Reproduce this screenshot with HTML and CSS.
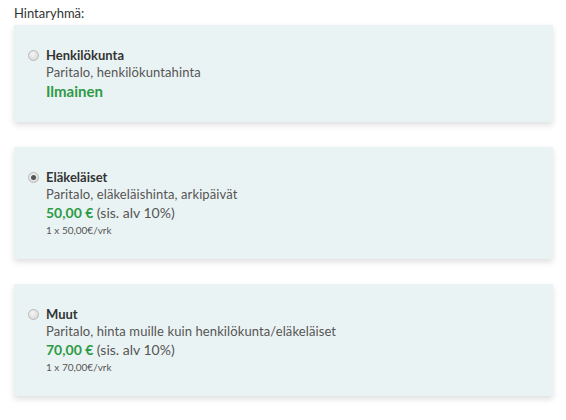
FILE: index.html
```html
<!DOCTYPE html>
<html lang="fi">
<head>
<meta charset="utf-8">
<link rel="stylesheet" href="styles.css">
</head>
<body>
<div class="group">
  <div class="label">Hintaryhmä:</div>
  <label class="card">
    <span class="radio"></span>
    <span class="info">
      <span class="title">Henkilökunta</span>
      <span class="desc">Paritalo, henkilökuntahinta</span>
      <span class="free">Ilmainen</span>
    </span>
  </label>
  <label class="card">
    <span class="radio checked"></span>
    <span class="info">
      <span class="title">Eläkeläiset</span>
      <span class="desc">Paritalo, eläkeläishinta, arkipäivät</span>
      <span class="price"><b>50,00 €</b> (sis. alv 10%)</span>
      <span class="unit">1 x 50,00€/vrk</span>
    </span>
  </label>
  <label class="card">
    <span class="radio"></span>
    <span class="info">
      <span class="title">Muut</span>
      <span class="desc">Paritalo, hinta muille kuin henkilökunta/eläkeläiset</span>
      <span class="price"><b>70,00 €</b> (sis. alv 10%)</span>
      <span class="unit">1 x 70,00€/vrk</span>
    </span>
  </label>
</div>
</body>
</html>
```
FILE: styles.css
```css
html, body {
  margin: 0;
  padding: 0;
  background: #ffffff;
}
body {
  font-family: Lato, "Open Sans", sans-serif;
  color: #444;
}
.group {
  padding: 5px 13px 0 14px;
  display: flex;
  flex-direction: column;
}
.label {
  font-size: 13px;
  line-height: 16px;
  color: #333;
  margin-bottom: 4px;
}
.card {
  display: flex;
  align-items: flex-start;
  background: #eaf3f3;
  box-shadow: 0 3px 6px rgba(0, 0, 0, 0.13);
  padding: 22px 16px 21px 14px;
  margin-bottom: 25px;
}
.radio {
  width: 9px;
  height: 9px;
  border-radius: 50%;
  border: 1px solid #b8b8b8;
  background: radial-gradient(circle at 40% 35%, #f4f4f4, #d4d4d4);
  margin: 3px 7px 0 0;
  flex: none;
  position: relative;
}
.radio.checked::after {
  content: "";
  position: absolute;
  left: 2px;
  top: 2px;
  width: 5px;
  height: 5px;
  border-radius: 50%;
  background: #555;
}
.info {
  display: flex;
  flex-direction: column;
}
.title {
  font-size: 13px;
  line-height: 16px;
  font-weight: 700;
  color: #333;
}
.desc {
  font-size: 13px;
  line-height: 18px;
  color: #555;
  letter-spacing: 0.1px;
}
.free {
  font-size: 15px;
  line-height: 20px;
  font-weight: 700;
  color: #2d9a45;
}
.price {
  font-size: 14px;
  line-height: 19px;
  color: #555;
}
.price b {
  color: #2d9a45;
  font-weight: 700;
}
.unit {
  font-size: 10px;
  line-height: 16px;
  color: #555;
}
```
